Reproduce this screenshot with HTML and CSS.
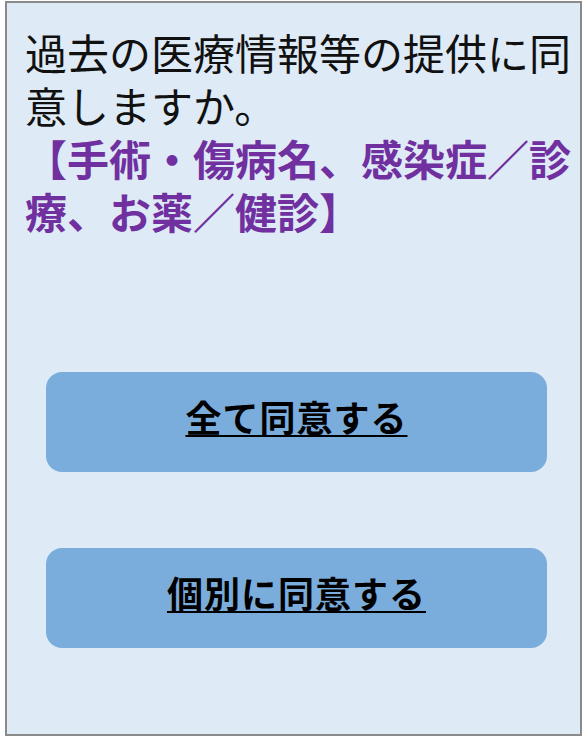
FILE: index.html
```html
<!DOCTYPE html>
<html lang="ja">
<head>
  <meta charset="UTF-8">
  <meta name="viewport" content="width=device-width, initial-scale=1.0">
  <title>同意確認</title>
  <link rel="stylesheet" href="styles.css">
</head>
<body>
  <div class="frame">
    <div class="question">
      過去の医療情報等の提供に同意しますか。<br>
      <span class="target">【手術・傷病名、感染症／診療、お薬／健診】</span>
    </div>
    <div class="choices">
      <a class="choice" href="#">全て同意する</a>
      <a class="choice" href="#">個別に同意する</a>
    </div>
  </div>
</body>
</html>
```

FILE: styles.css
```css
body {
  margin: 0;
  padding: 1px 0 0 5px;
  background-color: #fff;
  font-family: 'Liberation Sans', 'Noto Sans CJK JP', sans-serif;
}
.frame {
  box-sizing: border-box;
  width: 577px;
  height: 735px;
  border: 2px solid #8a8a8a;
  background-color: #deeaf6;
  padding: 26px 0 0 18px;
}
.question {
  font-size: 42px;
  line-height: 53px;
  color: #111;
  width: 550px;
}
.target {
  color: #7030a0;
  font-weight: bold;
}
.choices {
  display: flex;
  flex-direction: column;
  gap: 76px;
  margin-top: 131px;
  margin-left: 21px;
}
.choice {
  box-sizing: border-box;
  display: flex;
  align-items: center;
  justify-content: center;
  width: 501px;
  height: 100px;
  padding-bottom: 12px;
  border-radius: 16px;
  background-color: #7aaddc;
  color: #000;
  font-size: 36px;
  font-weight: bold;
  letter-spacing: 1px;
  text-decoration: underline;
  text-underline-offset: 3px;
  text-decoration-thickness: 2px;
}
```
